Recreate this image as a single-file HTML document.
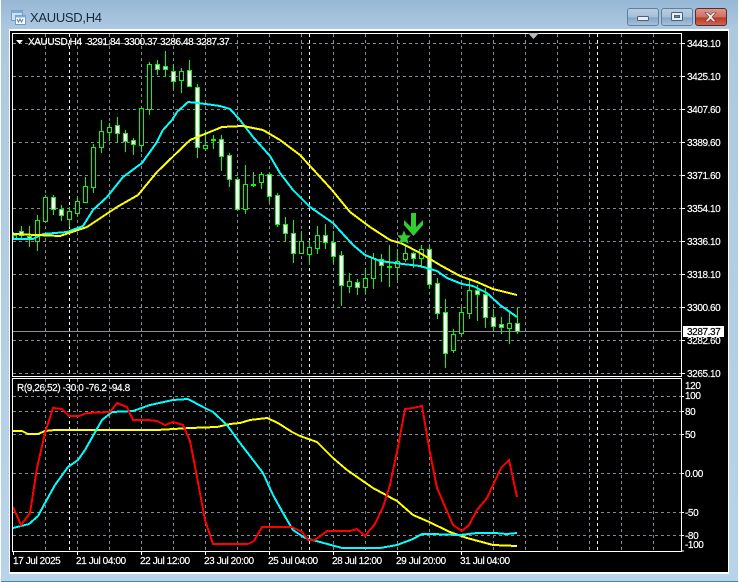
<!DOCTYPE html>
<html><head><meta charset="utf-8"><style>
html,body{margin:0;padding:0;background:#fff}
body{width:739px;height:582px;overflow:hidden;position:relative}
svg{position:absolute;left:0;top:0;display:block}
text{font-family:"Liberation Sans",sans-serif;font-size:10px;fill:#fff;stroke:#fff;stroke-width:.18px;letter-spacing:-.4px}
</style></head><body>
<svg width="739" height="582" viewBox="0 0 739 582" xmlns="http://www.w3.org/2000/svg">
<defs>
<linearGradient id="win" x1="0" y1="0" x2="0" y2="1"><stop offset="0" stop-color="#97b8d6"/><stop offset=".05" stop-color="#aec8e0"/><stop offset="1" stop-color="#b9d3ea"/></linearGradient>
<linearGradient id="btn" x1="0" y1="0" x2="0" y2="1"><stop offset="0" stop-color="#b9cee2"/><stop offset=".5" stop-color="#a5bfd9"/><stop offset=".55" stop-color="#84a5c6"/><stop offset="1" stop-color="#a8c4de"/></linearGradient>
<linearGradient id="cls" x1="0" y1="0" x2="0" y2="1"><stop offset="0" stop-color="#dd9a8e"/><stop offset=".5" stop-color="#cf6f60"/><stop offset=".55" stop-color="#b93a2a"/><stop offset="1" stop-color="#cf6a4d"/></linearGradient>
</defs>
<rect width="739" height="582" fill="#fff"/>
<rect x="1" y="0" width="737" height="581" fill="url(#win)"/>
<rect x="1" y="581" width="737" height="1" fill="#2f8f9f"/>
<rect x="9" y="29" width="720" height="545" fill="#fff"/>
<rect x="10" y="31" width="718" height="541" fill="#000"/>

<!-- title -->
<g>
<rect x="11.500" y="10.500" width="11" height="10" fill="#cfe0f2" stroke="#6f9ccc"/>
<rect x="11.500" y="10.500" width="11" height="2.500" fill="#7fa9d6"/>
<rect x="15.500" y="15.500" width="10" height="9" fill="#fff" stroke="#6f9ccc"/>
<rect x="15.500" y="15.500" width="10" height="2" fill="#7fa9d6"/>
<path d="M17 19l1.500 3 1.500-3 1.500 3 1.500-3" fill="none" stroke="#4f7fb5"/>
</g>
<text x="30" y="22" style="font-size:13px;fill:#1b2a3a;stroke:none;letter-spacing:-.3px">XAUUSD,H4</text>

<!-- buttons -->
<rect x="627.500" y="8.500" width="31" height="17" rx="2.500" fill="url(#btn)" stroke="#5f7f9f"/>
<rect x="637.500" y="16.500" width="11" height="4" rx="1" fill="#e8eef5" stroke="#4c6078"/>
<rect x="661.500" y="8.500" width="31" height="17" rx="2.500" fill="url(#btn)" stroke="#5f7f9f"/>
<rect x="671.500" y="12.500" width="11" height="8" rx="1" fill="#e8eef5" stroke="#4c6078"/>
<rect x="674.500" y="15.500" width="5" height="2" fill="#6f88a3" stroke="#4c6078"/>
<rect x="695.500" y="8.500" width="31" height="17" rx="2.500" fill="url(#cls)" stroke="#5a2a34"/>
<path d="M705 12.500l3 0 2.500 2.500 2.500-2.500 3 0-4 4.500 4 4.500-3 0-2.500-2.500-2.500 2.500-3 0 4-4.500z" fill="#eee" stroke="#6b3a3a" stroke-width=".6"/>

<!-- grid verticals -->
<g stroke="#7f8a99" stroke-width="1" stroke-dasharray="3 3" fill="none" shape-rendering="crispEdges">
<path d="M45.500 34V376M77.500 34V376M109.500 34V376M141.500 34V376M173.500 34V376M205.500 34V376M237.500 34V376M269.500 34V376M301.500 34V376M333.500 34V376M365.500 34V376M397.500 34V376M429.500 34V376M461.500 34V376M493.500 34V376M525.500 34V376M557.500 34V376M589.500 34V376M621.500 34V376M653.500 34V376"/>
<path d="M45.500 379V551M77.500 379V551M109.500 379V551M141.500 379V551M173.500 379V551M205.500 379V551M237.500 379V551M269.500 379V551M301.500 379V551M333.500 379V551M365.500 379V551M397.500 379V551M429.500 379V551M461.500 379V551M493.500 379V551M525.500 379V551M557.500 379V551M589.500 379V551M621.500 379V551M653.500 379V551"/>
<path d="M13 43.500H681M13 76.500H681M13 109.500H681M13 142.500H681M13 175.500H681M13 208.500H681M13 241.500H681M13 274.500H681M13 307.500H681M13 340.500H681M13 373.500H681"/>
<path d="M13 396.500H681M13 411.500H681M13 434.500H681M13 473.500H681M13 512.500H681M13 535.500H681"/>
</g>
<g stroke="#fff" stroke-width="1" stroke-dasharray="3 3" fill="none" shape-rendering="crispEdges">
<path d="M69.500 34V376M309.500 34V376M597.500 34V376M69.500 379V551M309.500 379V551M597.500 379V551"/>
</g>

<!-- bid line -->
<rect x="13" y="331" width="668" height="1" fill="#8a8f96"/>

<!-- wicks -->
<path shape-rendering="crispEdges" fill="none" stroke="#00ff00" d="M13.500 232V240M21.500 226V238M29.500 226V247M37.500 215V251M45.500 195V221M53.500 195V215M61.500 205V221M69.500 207V227M77.500 197V216M85.500 177V202M93.500 144V193M101.500 120V153M109.500 123V141M117.500 117V143M125.500 130V152M133.500 138V155M141.500 108V152M149.500 62V115M157.500 60V75M165.500 51V77M173.500 64V89M181.500 68V93M189.500 60V87M197.500 84V158M205.500 130V151M213.500 135V149M221.500 135V171M229.500 153V187M237.500 177V210M245.500 165V214M253.500 172V187M261.500 172V189M269.500 173V203M277.500 193V227M285.500 217V242M293.500 220V263M301.500 231V253M309.500 240V265M317.500 226V254M325.500 224V249M333.500 231V264M341.500 251V306M349.500 273V293M357.500 279V295M365.500 268V294M373.500 253V289M381.500 254V282M389.500 245V287M397.500 249V280M405.500 246V262M413.500 252V268M421.500 245V268M429.500 245V289M437.500 278V319M445.500 299V368M453.500 329V353M461.500 307V337M469.500 280V319M477.500 285V321M485.500 288V328M493.500 309V331M501.500 317V334M509.500 313V344M517.500 307V334"/>
<!-- bull bodies -->
<g fill="#000" stroke="#00ff00" shape-rendering="crispEdges">
<rect x="13.500" y="235.500" width="3" height="3"/>
<rect x="35.500" y="220.500" width="4" height="21"/>
<rect x="43.500" y="197.500" width="4" height="24"/>
<rect x="67.500" y="211.500" width="4" height="8"/>
<rect x="75.500" y="201.500" width="4" height="12"/>
<rect x="83.500" y="186.500" width="4" height="16"/>
<rect x="91.500" y="147.500" width="4" height="40"/>
<rect x="99.500" y="131.500" width="4" height="16"/>
<rect x="107.500" y="127.500" width="4" height="5"/>
<rect x="139.500" y="108.500" width="4" height="37"/>
<rect x="147.500" y="64.500" width="4" height="45"/>
<rect x="179.500" y="71.500" width="4" height="9"/>
<rect x="203.500" y="145.500" width="4" height="3"/>
<rect x="243.500" y="184.500" width="4" height="25"/>
<rect x="259.500" y="174.500" width="4" height="8"/>
<rect x="299.500" y="241.500" width="4" height="12"/>
<rect x="307.500" y="247.500" width="4" height="7"/>
<rect x="315.500" y="235.500" width="4" height="13"/>
<rect x="347.500" y="281.500" width="4" height="5"/>
<rect x="363.500" y="278.500" width="4" height="9"/>
<rect x="371.500" y="258.500" width="4" height="20"/>
<rect x="395.500" y="261.500" width="4" height="6"/>
<rect x="403.500" y="253.500" width="4" height="6"/>
<rect x="419.500" y="249.500" width="4" height="9"/>
<rect x="451.500" y="334.500" width="4" height="16"/>
<rect x="459.500" y="312.500" width="4" height="21"/>
<rect x="467.500" y="290.500" width="4" height="23"/>
<rect x="507.500" y="323.500" width="4" height="5"/>
</g>
<!-- bear bodies -->
<g fill="#fff" stroke="#00ff00" shape-rendering="crispEdges">
<rect x="19.500" y="231.500" width="4" height="4"/>
<rect x="27.500" y="236.500" width="4" height="2"/>
<rect x="51.500" y="197.500" width="4" height="12"/>
<rect x="59.500" y="209.500" width="4" height="6"/>
<rect x="115.500" y="125.500" width="4" height="8"/>
<rect x="123.500" y="133.500" width="4" height="8"/>
<rect x="131.500" y="140.500" width="4" height="4"/>
<rect x="155.500" y="64.500" width="4" height="5"/>
<rect x="163.500" y="66.500" width="4" height="3"/>
<rect x="171.500" y="71.500" width="4" height="10"/>
<rect x="187.500" y="70.500" width="4" height="16"/>
<rect x="195.500" y="87.500" width="4" height="60"/>
<rect x="219.500" y="139.500" width="4" height="17"/>
<rect x="227.500" y="155.500" width="4" height="24"/>
<rect x="235.500" y="179.500" width="4" height="30"/>
<rect x="267.500" y="174.500" width="4" height="22"/>
<rect x="275.500" y="195.500" width="4" height="29"/>
<rect x="283.500" y="224.500" width="4" height="9"/>
<rect x="291.500" y="233.500" width="4" height="20"/>
<rect x="323.500" y="235.500" width="4" height="7"/>
<rect x="331.500" y="242.500" width="4" height="14"/>
<rect x="339.500" y="255.500" width="4" height="30"/>
<rect x="355.500" y="282.500" width="4" height="5"/>
<rect x="379.500" y="259.500" width="4" height="6"/>
<rect x="411.500" y="253.500" width="4" height="5"/>
<rect x="427.500" y="249.500" width="4" height="35"/>
<rect x="435.500" y="283.500" width="4" height="30"/>
<rect x="443.500" y="312.500" width="4" height="41"/>
<rect x="475.500" y="290.500" width="4" height="4"/>
<rect x="483.500" y="294.500" width="4" height="23"/>
<rect x="491.500" y="317.500" width="4" height="9"/>
<rect x="499.500" y="324.500" width="4" height="3"/>
<rect x="515.500" y="323.500" width="4" height="8"/>
</g>
<!-- dojis -->
<path shape-rendering="crispEdges" fill="none" stroke="#00ff00" stroke-width="2" d="M211 140H216M251 185H256M387 267H392"/>

<!-- main MAs -->
<polyline shape-rendering="crispEdges" fill="none" stroke="#00ffff" stroke-width="2" points="13,239 33,239 43,234 67,232 83,226 93,210 107,197 123,177 142,163 157,142 163,130 172,120 177,112 188,102 198,103 220,106 230,109 240,120 253,137 270,156 280,173 293,190 310,207 333,223 353,245 365,255 380,261 403,264 420,266 437,271 447,278 462,284 473,286 487,293 500,305 517,317"/>
<polyline shape-rendering="crispEdges" fill="none" stroke="#ffff00" stroke-width="2" points="13,234 60,236 87,227 117,207 138,195 157,172 190,140 222,127 243,126 263,130 280,140 300,155 332,190 350,212 370,227 390,240 403,244 420,253 440,265 460,276 477,282 493,289 517,295"/>

<!-- arrow & star -->
<path fill="#32cd32" d="M411 213H416V227L423 220V225L413.500 236 404 225V220L411 227Z"/>
<path fill="#32cd32" d="M404 230.500l2 4.700 5 .3-3.600 3.200 1.300 5.300-4.700-2.800-4.700 2.800 1.300-5.300-3.600-3.200 5-.3z"/>

<!-- sub lines -->
<polyline shape-rendering="crispEdges" fill="none" stroke="#ffff00" stroke-width="2" points="13,431 22,431 28,434 38,434 45,431 55,430 157,430 190,428 217,427 230,424 240,423 250,420 267,418 278,423 292,432 300,436 317,442 333,458 347,470 373,488 397,501 413,515 427,521 450,532 467,538 493,545 517,546"/>
<polyline shape-rendering="crispEdges" fill="none" stroke="#00ffff" stroke-width="2" points="13,528 29,524 38,516 45,503 55,485 68,467 78,460 85,450 102,420 112,412 133,411 150,405 173,400 188,399 203,407 213,412 227,425 240,443 250,456 263,473 273,495 283,513 293,530 305,538 320,542 342,548 380,548 397,545 413,539 422,534 432,534 460,535 477,533 495,533 507,534 517,533"/>
<polyline shape-rendering="crispEdges" fill="none" stroke="#ff0000" stroke-width="2" points="13,507 21,525 30,513 37,468 45,433 53,408 62,409 69,416 79,416 87,413 110,412 117,403 127,407 133,420 148,420 157,421 165,425 173,422 183,425 190,441 197,477 205,520 213,544 248,544 254,541 262,527 292,527 302,532 308,540 315,540 327,531 350,531 357,529 365,536 375,524 383,507 390,485 398,447 405,409 413,408 422,406 430,453 437,488 453,525 462,531 469,525 477,510 487,498 501,468 509,460 517,497"/>

<!-- frames -->
<g fill="none" stroke="#fff" shape-rendering="crispEdges">
<path d="M12.500 33.500H681.500V376.500H12.500Z"/>
<path d="M12.500 378.500H681.500V551.500H12.500Z"/>
<path d="M681 43.500H685M681 76.500H685M681 109.500H685M681 142.500H685M681 175.500H685M681 208.500H685M681 241.500H685M681 274.500H685M681 307.500H685M681 340.500H685M681 373.500H685"/>
<path d="M681 396.500H684M681 411.500H684M681 434.500H684M681 473.500H684M681 512.500H684M681 535.500H684M681 551H684"/>
<path d="M13.500 552V555M77.500 552V555M141.500 552V555M205.500 552V555M269.500 552V555M333.500 552V555M397.500 552V555M461.500 552V555"/>
</g>
<polygon points="528,33 539,33 533.500,39" fill="#b8bcc2"/>

<!-- header -->
<polygon points="16,40 23,40 19.500,44" fill="#fff"/>
<text x="28" y="45">XAUUSD,H4</text>
<text x="87" y="45">3291.84</text>
<text x="124" y="45">3300.37</text>
<text x="160" y="45">3286.48</text>
<text x="196" y="45">3287.37</text>
<text x="17" y="391">R(9,26,52) -30.0 -76.2 -94.8</text>

<!-- price axis -->
<text x="687" y="47">3443.10</text>
<text x="687" y="80">3425.10</text>
<text x="687" y="113">3407.60</text>
<text x="687" y="146">3389.60</text>
<text x="687" y="179">3371.60</text>
<text x="687" y="212">3354.10</text>
<text x="687" y="245">3336.10</text>
<text x="687" y="278">3318.10</text>
<text x="687" y="311">3300.60</text>
<text x="687" y="344">3282.60</text>
<text x="687" y="377">3265.10</text>
<rect x="683" y="326" width="41" height="11" fill="#fff"/>
<text x="687" y="335" style="fill:#000;stroke:#000">3287.37</text>

<text x="685" y="389">120</text>
<text x="685" y="399">100</text>
<text x="685" y="415">80</text>
<text x="685" y="438">50</text>
<text x="685" y="477">0.00</text>
<text x="685" y="516">-50</text>
<text x="685" y="539">-80</text>
<text x="685" y="548">-100</text>

<!-- time axis -->
<text x="13" y="564">17 Jul 2025</text>
<text x="76" y="564">21 Jul 04:00</text>
<text x="140" y="564">22 Jul 12:00</text>
<text x="204" y="564">23 Jul 20:00</text>
<text x="268" y="564">25 Jul 04:00</text>
<text x="332" y="564">28 Jul 12:00</text>
<text x="396" y="564">29 Jul 20:00</text>
<text x="460" y="564">31 Jul 04:00</text>
</svg>
</body></html>
